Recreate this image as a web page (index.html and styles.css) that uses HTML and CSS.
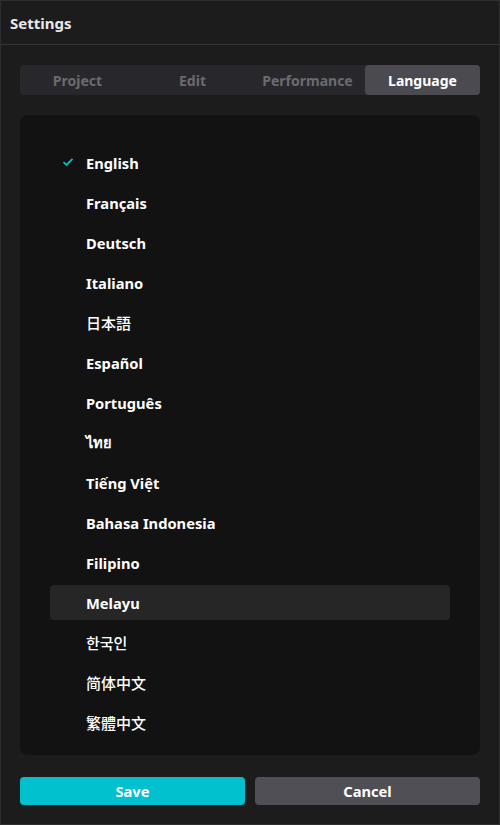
FILE: index.html
```html
<!DOCTYPE html>
<html lang="en">
  <head>
    <meta charset="UTF-8" />
    <title>Settings</title>
    <link rel="stylesheet" href="styles.css">
  </head>
  <body>
    <div class="window">
      <header class="titlebar">Settings</header>

      <div class="content">
        <nav class="tabs">
          <span class="tab">Project</span>
          <span class="tab">Edit</span>
          <span class="tab">Performance</span>
          <span class="tab active">Language</span>
        </nav>

        <ul class="langs">
          <li class="lang selected">
            <svg class="check" width="12" height="10" viewBox="0 0 12 10">
              <path d="M1.5 5.2 L4.5 8 L10.5 1.8" fill="none" stroke="#00c1cd" stroke-width="1.8" />
            </svg>
            English
          </li>
          <li class="lang">Français</li>
          <li class="lang">Deutsch</li>
          <li class="lang">Italiano</li>
          <li class="lang cjk" lang="ja">日本語</li>
          <li class="lang">Español</li>
          <li class="lang">Português</li>
          <li class="lang">ไทย</li>
          <li class="lang">Tiếng Việt</li>
          <li class="lang">Bahasa Indonesia</li>
          <li class="lang">Filipino</li>
          <li class="lang hover">Melayu</li>
          <li class="lang cjk" lang="ko">한국인</li>
          <li class="lang cjk" lang="zh-CN">简体中文</li>
          <li class="lang cjk" lang="zh-TW">繁體中文</li>
        </ul>

        <div class="actions">
          <button class="btn save">Save</button>
          <button class="btn cancel">Cancel</button>
        </div>
      </div>
    </div>
  </body>
</html>
```

FILE: styles.css
```css
html,
body {
  margin: 0;
  height: 100%;
}

body {
  background-color: #1c1c1c;
  font-family: "Noto Sans", "Open Sans", "Noto Sans CJK SC", sans-serif;
  color: #fff;
}

.window {
  box-sizing: border-box;
  height: 825px;
  border: 1px solid #2f2f2f;
  display: flex;
  flex-direction: column;
}

.titlebar {
  height: 43px;
  border-bottom: 1px solid #333;
  padding-left: 9px;
  display: flex;
  align-items: center;
  font-size: 15px;
  font-weight: 700;
  color: #e8e8e8;
}

.content {
  padding: 20px 19px 0 19px;
  display: flex;
  flex-direction: column;
}

.tabs {
  display: grid;
  grid-template-columns: repeat(4, 1fr);
  height: 30px;
  background-color: #28282c;
  border-radius: 4px;
}

.tab {
  display: flex;
  align-items: center;
  justify-content: center;
  font-size: 14px;
  font-weight: 700;
  color: #6b6b6e;
  border-radius: 4px;
}

.tab.active {
  background-color: #4a4a50;
  color: #fff;
}

.langs {
  list-style: none;
  margin: 20px 0 0 0;
  padding: 30px 30px 15px 30px;
  background-color: #121212;
  border-radius: 8px;
  display: flex;
  flex-direction: column;
  gap: 5px;
}

.lang {
  position: relative;
  height: 35px;
  padding-left: 36px;
  display: flex;
  align-items: center;
  font-size: 14.7px;
  font-weight: 700;
  border-radius: 4px;
}

.lang.cjk {
  font-family: "Noto Sans CJK SC", sans-serif;
  font-size: 15px;
  font-weight: 500;
}

.lang.cjk:lang(ja) {
  font-family: "Noto Sans CJK JP", sans-serif;
}

.lang.cjk:lang(ko) {
  font-family: "Noto Sans CJK KR", sans-serif;
}

.lang.cjk:lang(zh-TW) {
  font-family: "Noto Sans CJK TC", sans-serif;
}

.lang.hover {
  background-color: #262626;
}

.check {
  position: absolute;
  left: 12px;
  top: 12px;
}

.actions {
  margin-top: 22px;
  display: grid;
  grid-template-columns: 1fr 1fr;
  gap: 10px;
}

.btn {
  height: 28px;
  border: none;
  border-radius: 4px;
  font-family: "Noto Sans", sans-serif;
  font-size: 14.7px;
  font-weight: 700;
  color: #fff;
  cursor: pointer;
}

.save {
  background-color: #00c1cd;
}

.cancel {
  background-color: #4f4f55;
}
```
